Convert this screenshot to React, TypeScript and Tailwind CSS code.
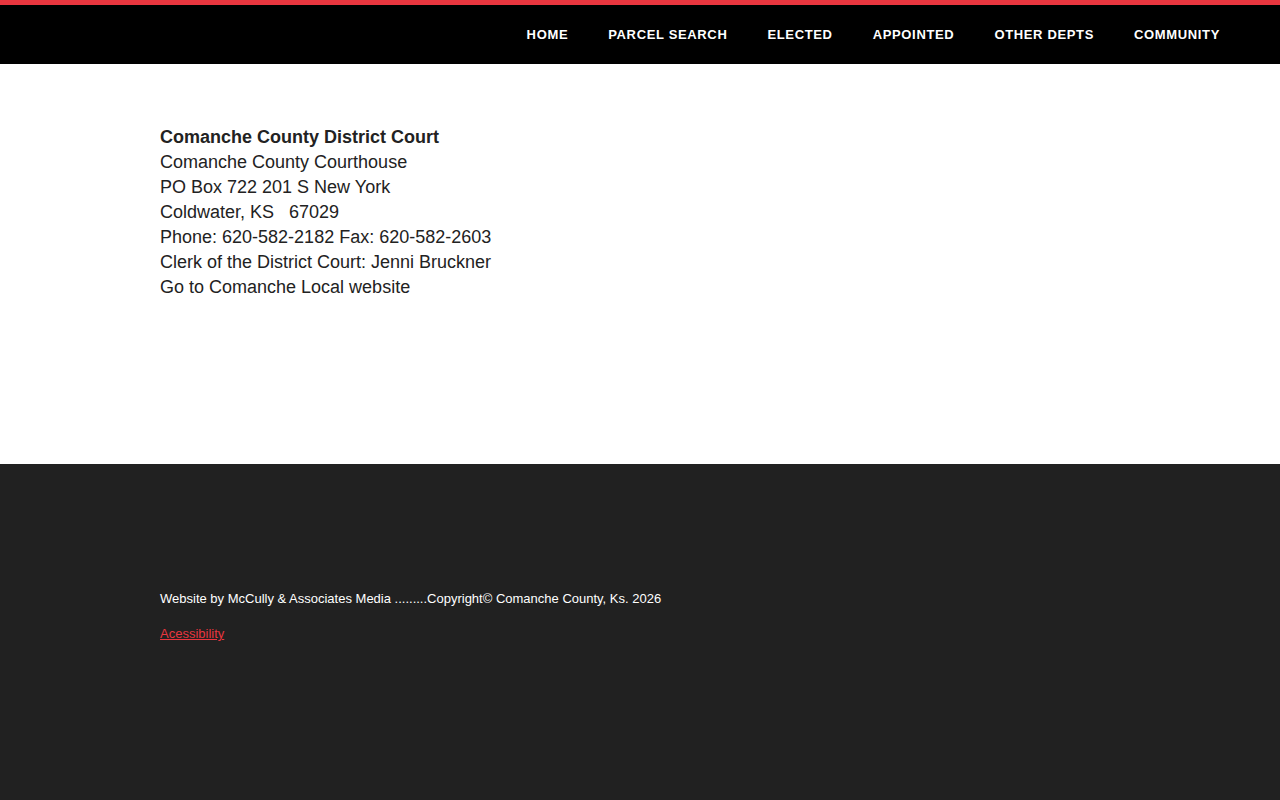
import React from "react";

const nav = ["HOME", "PARCEL SEARCH", "ELECTED", "APPOINTED", "OTHER DEPTS", "COMMUNITY"];

export default function App() {
  return (
    <div className="min-h-[800px] flex flex-col bg-[#212121]" style={{ fontFamily: '"Liberation Sans", Arial, sans-serif' }}>
      <div className="h-[5px] bg-[#e8363f]" />
      <header className="h-[59px] bg-black flex items-center justify-end pr-[60px]">
        <nav className="flex gap-[40px]">
          {nav.map((n) => (
            <a key={n} className="text-white text-[13px] font-bold tracking-[0.65px] leading-none">
              {n}
            </a>
          ))}
        </nav>
      </header>
      <main className="h-[400px] bg-white pl-[160px] pt-[61px] text-[18px] leading-[25px] text-[#222]">
        <div className="font-bold">Comanche County District Court</div>
        <div>Comanche County Courthouse</div>
        <div>PO Box 722 201 S New York</div>
        <div className="whitespace-pre">Coldwater, KS   67029</div>
        <div>Phone: 620-582-2182 Fax: 620-582-2603</div>
        <div>Clerk of the District Court: Jenni Bruckner</div>
        <div>Go to Comanche Local website</div>
      </main>
      <footer className="flex-1 bg-[#212121] pl-[160px] pt-[127px]">
        <p className="text-white text-[13px] leading-[16px]">
          Website by McCully &amp; Associates Media .........Copyright© Comanche County, Ks. 2026
        </p>
        <p className="mt-[19px] text-[13px] leading-[16px]">
          <a className="text-[#e8363f] underline">Acessibility</a>
        </p>
      </footer>
    </div>
  );
}
